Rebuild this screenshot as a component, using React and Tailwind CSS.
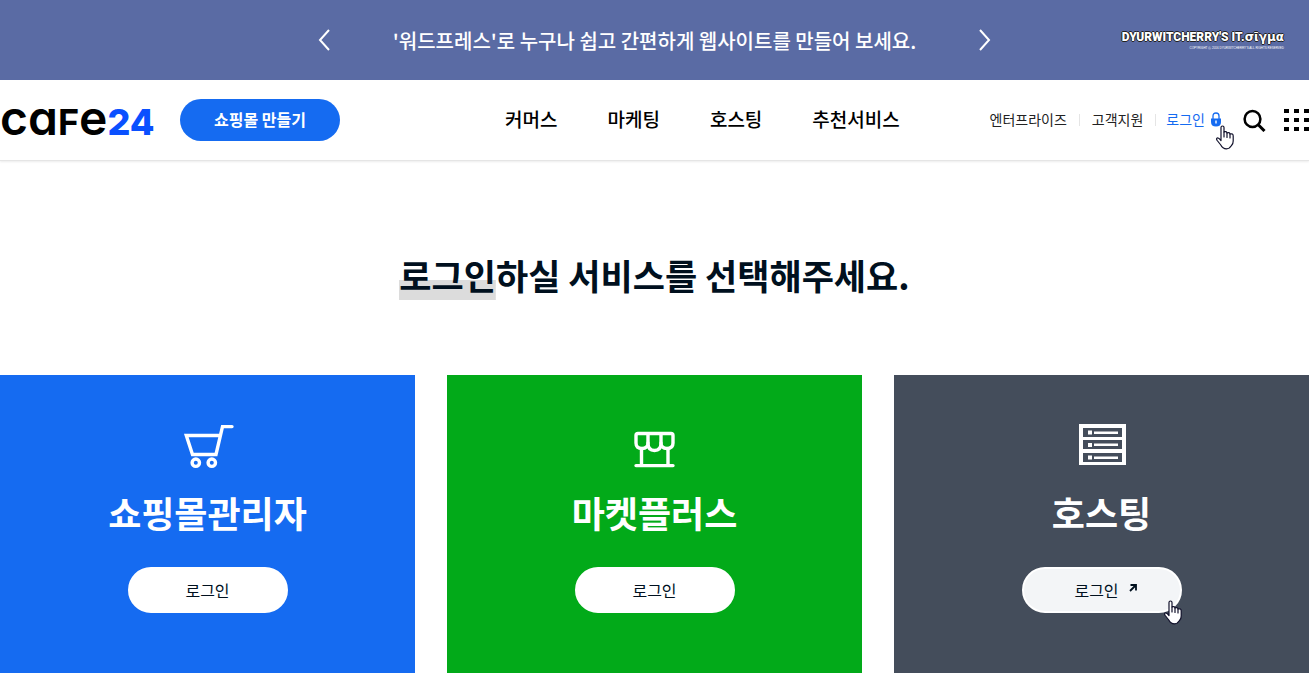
import React from 'react';

const MENUS = ['커머스', '마케팅', '호스팅', '추천서비스'];

const CartIcon = () => (
    <svg width="52" height="46" viewBox="0 0 52 46" fill="none" stroke="white" strokeWidth="3.4" strokeLinejoin="miter" strokeLinecap="round" aria-hidden="true">
        <path d="M38 12.500H4.300L10.500 31.500H34L40.500 3.600H50" />
        <circle cx="13.8" cy="39.7" r="3.7" />
        <circle cx="29.8" cy="39.7" r="3.7" />
    </svg>
);

const StoreIcon = () => (
    <svg width="42" height="46" viewBox="0 0 42 46" fill="none" stroke="white" strokeWidth="3.4" strokeLinecap="round" strokeLinejoin="round" aria-hidden="true">
        <path d="M2 12.500Q2 10.500 4 10.500H37Q39 10.500 39 12.500V20Q39 25.500 33 25.500Q27 25.500 27 20Q27 27.500 20.500 27.500Q14 27.500 14 20Q14 25.500 8 25.500Q2 25.500 2 20Z" />
        <path d="M14 11V20M27 11V20M7.500 26V42M34 26V42M2 42.600H39" />
    </svg>
);

const ServerIcon = () => (
    <svg width="48" height="46" viewBox="0 0 48 46" aria-hidden="true">
        <path fill="white" fillRule="evenodd" d="M1 1H48V42H1ZM5 5V14H44V5ZM5 17V26H44V17ZM5 30V39H44V30Z" />
        <path fill="white" d="M10 7.500h4v4h-4zM16 8.500h24v2.500h-24zM10 20h4v4h-4zM16 20.500h24v2.500h-24zM10 32.500h4v4h-4zM16 33.500h24v2.500h-24z" />
    </svg>
);

const HandCursor = ({ className }) => (
    <svg className={className} width="18" height="25" viewBox="0 0 18 25" fill="white" stroke="#10102a" strokeWidth="1.200" strokeLinejoin="round" strokeLinecap="round" aria-hidden="true">
        <path d="M5 2.500Q5 1 6.500 1T8 2.500V7Q10.500 5.800 11 8Q13.500 6.800 14 9Q17.200 8.200 17.200 11V16Q17.200 19 15.500 20.500Q13.500 23.800 10.500 23.800Q6.500 23.800 4.800 20L1.200 15.500Q0 13.500 1.200 13Q2.500 12.500 5 15.500Z" />
        <path d="M8 7V12M11 8V12.500M14 9V13" fill="none" />
    </svg>
);

const SERVICES = [
    { name: '쇼핑몰관리자', color: 'bg-[#156bf1]', Icon: CartIcon },
    { name: '마켓플러스', color: 'bg-[#02aa19]', Icon: StoreIcon },
    { name: '호스팅', color: 'bg-[#444d5b]', Icon: ServerIcon, external: true },
];

const Banner = () => (
    <div className="relative flex h-20 items-center justify-center bg-[#5a6ba4] text-white">
        <div className="flex items-center gap-[62px]">
            <button type="button" aria-label="이전" className="cursor-pointer">
                <svg width="14" height="22" viewBox="0 0 14 22" fill="none" stroke="currentColor" strokeWidth="2">
                    <path d="M12 1L3 11L12 21" />
                </svg>
            </button>
            <p className="pt-[2px] text-xl font-medium">'워드프레스'로 누구나 쉽고 간편하게 웹사이트를 만들어 보세요.</p>
            <button type="button" aria-label="다음" className="cursor-pointer">
                <svg width="14" height="22" viewBox="0 0 14 22" fill="none" stroke="currentColor" strokeWidth="2">
                    <path d="M2 1L11 11L2 21" />
                </svg>
            </button>
        </div>
        <div className="absolute right-[25px] top-7 text-right">
            <p className="font-['Roboto',sans-serif] text-[12px] font-black leading-[18px] [text-shadow:1px_0_#222,-1px_0_#222,0_1px_#222,0_-1px_#222]">
                DYURWITCHERRY'S IT.<span className="font-['DejaVu_Sans',sans-serif] font-bold">σῖγμα</span>
            </p>
            <p className="font-['Liberation_Sans',sans-serif] text-[3px] leading-[4px]">COPYRIGHT ⓒ 2016 DYURWITCHERRY'S ALL RIGHTS RESERVED</p>
        </div>
    </div>
);

const Header = () => (
    <header className="flex h-[81px] items-center border-b border-[#e5e5e5] bg-white shadow-[0_1px_2px_rgba(0,0,0,0.08)]">
        <a href="#" className="flex w-[155px] items-baseline whitespace-nowrap font-['Inter',sans-serif] text-[48px] font-semibold leading-[54px] text-black [font-feature-settings:'cv11']">
            ca<span className="text-[36px] font-bold">F</span>e<span className="text-[36px] font-extrabold text-[#0a50ff]">24</span>
        </a>
        <a href="#" className="ml-[25px] flex h-[42px] w-40 items-center justify-center rounded-full bg-[#156bf1] pb-[2px] text-base font-bold text-white">
            쇼핑몰 만들기
        </a>
        <nav className="ml-[165px] flex gap-[50px] pb-[2px] text-[19px] font-medium text-black">
            {MENUS.map((menu) => (
                <a key={menu} href="#">{menu}</a>
            ))}
        </nav>
        <div className="ml-auto flex items-center text-sm text-[#222]">
            <a href="#" className="pb-[2px]">엔터프라이즈</a>
            <span className="mx-3 h-3 w-px bg-[#e5e5e5]" />
            <a href="#" className="pb-[2px]">고객지원</a>
            <span className="ml-3 mr-[10px] h-3 w-px bg-[#e5e5e5]" />
            <a href="#" className="relative flex items-center gap-[5px] pb-[2px] text-[#156bf1]">
                로그인
                <svg width="12" height="15" viewBox="0 0 12 15" aria-hidden="true">
                    <path d="M3 7V4Q3 1 6 1T9 4V7" fill="none" stroke="#156bf1" strokeWidth="1.300" />
                    <path d="M1 6.500H11V10Q11 14.500 6 14.500T1 10Z" fill="#156bf1" />
                    <path d="M5.300 8.500H6.700V11.500H5.300Z" fill="white" />
                </svg>
                <HandCursor className="absolute left-[50px] top-4" />
            </a>
            <button type="button" aria-label="검색" className="ml-[21px] cursor-pointer">
                <svg width="23" height="23" viewBox="0 0 23 23" fill="none" stroke="black" strokeWidth="2.500">
                    <circle cx="9.500" cy="10" r="7.900" />
                    <path d="M15 15.500L21.500 22" strokeWidth="3" />
                </svg>
            </button>
            <button type="button" aria-label="전체 메뉴" className="ml-[18px] cursor-pointer">
                <svg width="25" height="23" viewBox="0 0 25 23" fill="black">
                    <path d="M0 0h5v4H0zM10 0h5v4h-5zM20 0h5v4h-5zM0 9h5v4H0zM10 9h5v4h-5zM20 9h5v4h-5zM0 18h5v4H0zM10 18h5v4h-5zM20 18h5v4h-5z" />
                </svg>
            </button>
        </div>
    </header>
);

const ServiceCard = ({ name, color, Icon, external }) => (
    <section className={`flex flex-col items-center pb-[60px] pt-12 text-white ${color}`}>
        <Icon />
        <h2 className="mt-4 text-4xl font-bold leading-[54px]">{name}</h2>
        <a
            href="#"
            className={`relative mt-7 flex h-[46px] w-40 items-center justify-center gap-[10px] rounded-full border-2 border-white text-base text-[#00101e] ${external ? 'bg-[#f3f5f7] pl-2' : 'bg-white'}`}
        >
            로그인
            {external && (
                <>
                    <svg width="8" height="8" viewBox="0 0 8 8" fill="none" stroke="currentColor" strokeWidth="1.800" className="mb-1" aria-hidden="true">
                        <path d="M1 7L7 1M1.500 1H7V6.500" />
                    </svg>
                    <HandCursor className="absolute -bottom-[14px] -right-[2px]" />
                </>
            )}
        </a>
    </section>
);

const App = () => {
    return (
        <div className="bg-white font-['Noto_Sans_CJK_KR','Noto_Sans',sans-serif]">
            <Banner />
            <Header />
            <main>
                <h1 className="pb-[73px] pt-[87px] text-center text-[35px] font-bold leading-[54px] text-[#00101e]">
                    <span className="bg-[linear-gradient(#dcdcdc,#dcdcdc)] bg-[length:100%_20px] bg-bottom bg-no-repeat">로그인</span>하실 서비스를 선택해주세요.
                </h1>
                <div className="grid grid-cols-3 gap-8">
                    {SERVICES.map((service) => (
                        <ServiceCard key={service.name} {...service} />
                    ))}
                </div>
            </main>
        </div>
    );
};

export default App;
